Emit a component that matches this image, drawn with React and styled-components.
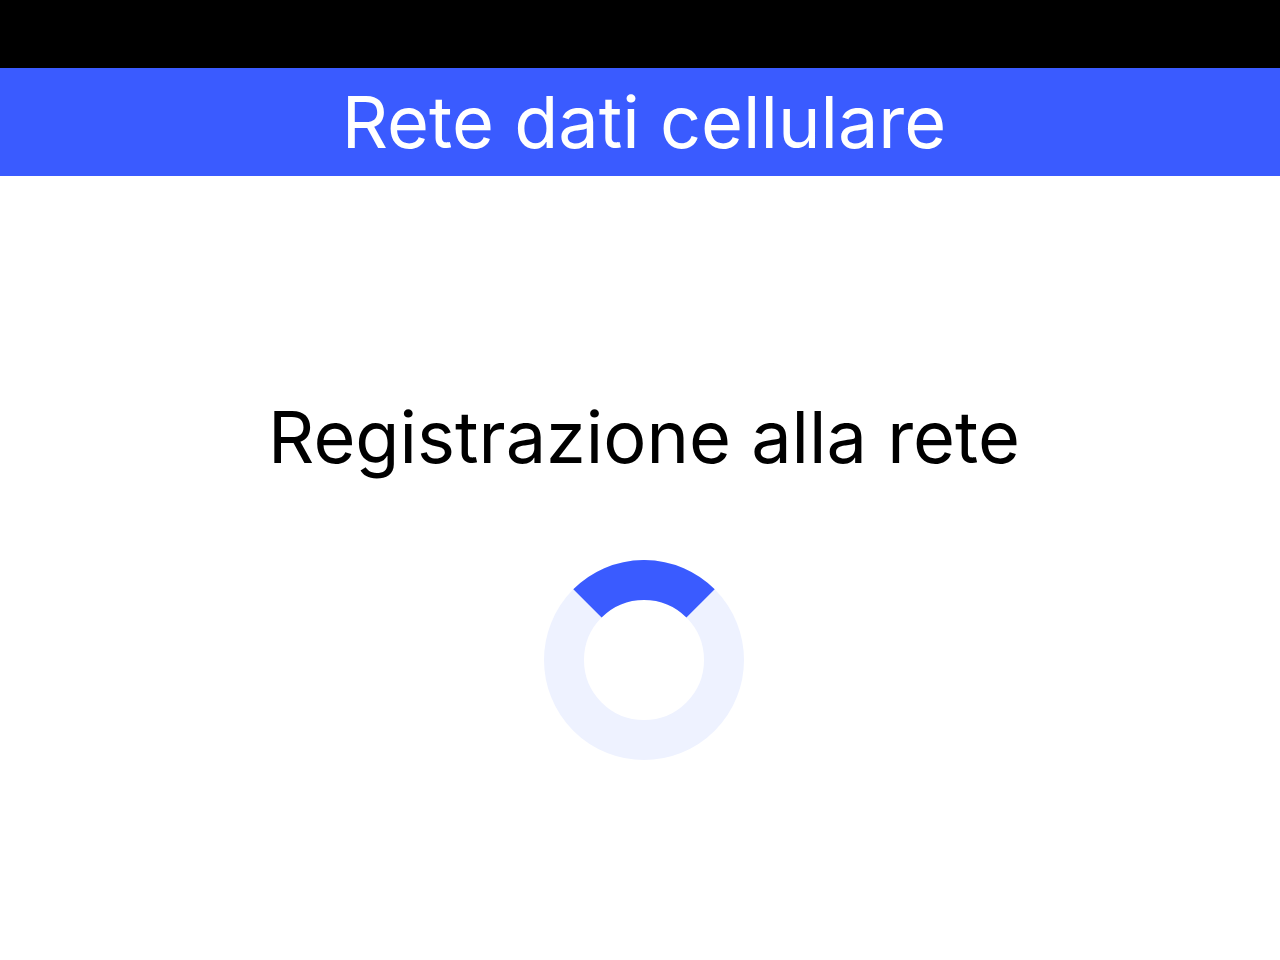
import React from "react";
import styled, { createGlobalStyle } from "styled-components";

const GlobalStyle = createGlobalStyle`
    html, body {
        margin: 0;
        padding: 0;
        background: #ffffff;
        font-family: Inter, "Noto Sans", sans-serif;
    }
`;

const Screen = styled.div`
    width: 1280px;
    height: 960px;
    display: flex;
    flex-direction: column;
    background: #ffffff;
`;

const StatusBar = styled.div`
    height: 68px;
    background: #000000;
`;

const TitleBar = styled.div`
    height: 108px;
    background: #3a5bff;
    display: flex;
    justify-content: center;
    align-items: center;
    padding-left: 8px;
`;

const Title = styled.h1`
    margin: 0;
    font-size: 72px;
    font-weight: 400;
    line-height: 108px;
    color: #ffffff;
`;

const Content = styled.main`
    flex: 1;
    display: flex;
    flex-direction: column;
    align-items: center;
    padding: 225px 0 0 8px;
`;

const Message = styled.h2`
    margin: 0;
    font-size: 72px;
    font-weight: 400;
    line-height: 72px;
    color: #000000;
`;

const Spinner = styled.svg`
    margin-top: 87px;
    width: 200px;
    height: 200px;
    display: block;
`;

const App = () => {
    return (
        <Screen>
            <GlobalStyle />
            <StatusBar />
            <TitleBar>
                <Title>Rete dati cellulare</Title>
            </TitleBar>
            <Content>
                <Message>Registrazione alla rete</Message>
                <Spinner viewBox="0 0 200 200">
                    <circle cx="100" cy="100" r="80" fill="none" stroke="#eef2ff" strokeWidth="40" />
                    <path d="M43.43 43.43 A80 80 0 0 1 156.57 43.43" fill="none" stroke="#3a5bff" strokeWidth="40" />
                </Spinner>
            </Content>
        </Screen>
    );
};

export default App;
